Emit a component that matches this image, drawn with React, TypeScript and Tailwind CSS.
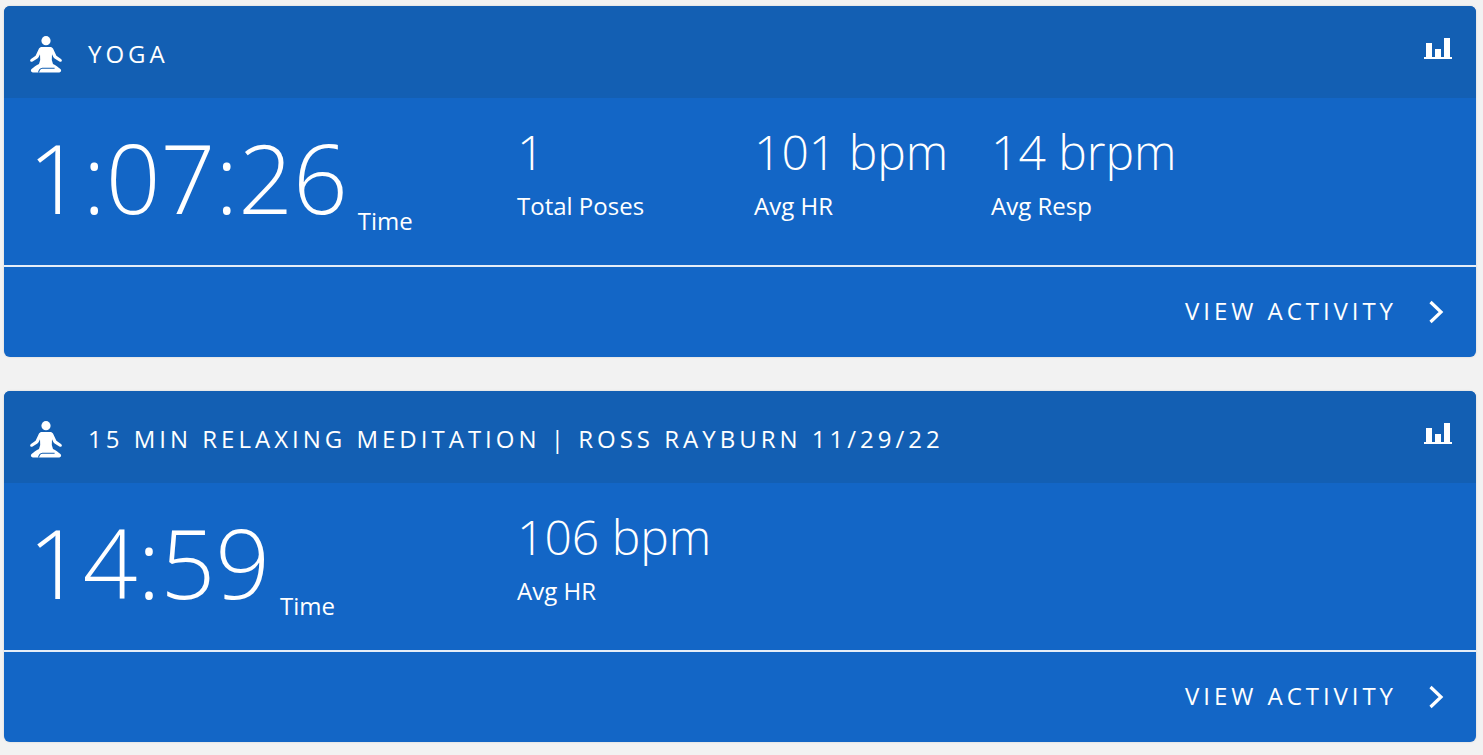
const YogaIcon = () => (
  <svg viewBox="0 0 32 37" className="w-[32px] h-[37px] shrink-0" fill="#fff">
    <circle cx="16" cy="4.7" r="4.6" />
    <path d="M9 12.6 C9.6 11.6 10.6 11 11.8 11 H20.2 C21.4 11 22.4 11.6 23 12.6 L26.4 19.8 L31 23 C31.9 23.6 32.1 24.5 31.6 25.2 C31.1 25.9 30.2 26 29.4 25.5 L24.6 22.4 C24 22 23.6 21.6 23.3 21 L22 18.2 L21.8 24 L23 28 C25.6 29.4 28.4 31.2 30.4 33 C31.8 34.4 31 36.5 29.2 36.5 H3 C1 36.5 .2 34.4 1.6 33 C3.6 31.2 6.4 29.4 9 28 L10.2 24 L10 18.2 L8.7 21 C8.4 21.6 8 22 7.4 22.4 L2.6 25.5 C1.8 26 .9 25.9 .4 25.2 C-.1 24.5 .1 23.6 1 23 L5.6 19.8 Z" />
    <path d="M8.5 36.5 C9 34.4 10.2 32.4 12.4 32.2 H24.6" fill="none" stroke="#135fb3" strokeWidth="1.1" />
  </svg>
);

const BarsIcon = () => (
  <svg viewBox="0 0 28 21" className="w-[28px] h-[21px]" fill="#fff">
    <rect x="2" y="5" width="6" height="14" />
    <rect x="11" y="11" width="6" height="8" />
    <rect x="20" y="0" width="6" height="19" />
    <rect x="0" y="19" width="28" height="2" />
  </svg>
);

const Chevron = () => (
  <svg viewBox="0 0 16 24" className="w-[16px] h-[24px]" fill="none" stroke="#fff" strokeWidth="3.2">
    <path d="M2.5 2 L13 12 L2.5 22" />
  </svg>
);

function Stat({ value, label }: { value: string; label: string }) {
  return (
    <div className="w-[237px] shrink-0 pt-[24px]">
      <div className="text-[48px] leading-[60px] font-light whitespace-nowrap">{value}</div>
      <div className="text-[24px] leading-[30px] mt-[9px]">{label}</div>
    </div>
  );
}

function ActivityCard({ title, time, stats }: { title: string; time: string; stats: { value: string; label: string }[] }) {
  return (
    <div className="bg-[#1366c6] rounded-[6px] overflow-hidden text-white shadow-[0_0_2px_rgba(0,0,0,0.15)]">
      <div className="h-[92px] bg-[#135fb3] flex items-center justify-between pl-[26px] pr-[24px]">
        <div className="flex items-center gap-[26px] pt-[4px]">
          <YogaIcon />
          <span className="text-[24px] tracking-[4px] uppercase leading-none">{title}</span>
        </div>
        <div className="self-start mt-[32px]"><BarsIcon /></div>
      </div>
      <div className="h-[167px] flex pl-[24px]">
        <div className="w-[489px] shrink-0 flex items-end pb-[29px]">
          <span className="text-[96px] leading-[120px] font-light -mb-[1px]">{time}</span>
          <span className="text-[24px] leading-[30px] ml-[10px]">Time</span>
        </div>
        {stats.map((s) => <Stat key={s.label} value={s.value} label={s.label} />)}
      </div>
      <div className="h-[2px] bg-[#e6eef8]" />
      <div className="h-[90px] flex items-center justify-end pr-[32px] gap-[33px]">
        <span className="text-[24px] tracking-[3.95px] uppercase leading-none -mr-[2px] pb-[2px]">View Activity</span>
        <Chevron />
      </div>
    </div>
  );
}

export default function App() {
  return (
    <div className="min-h-[755px] bg-[#f2f2f2] pt-[6px] pl-[4px] pr-[7px] flex flex-col gap-[34px] font-['Open_Sans',sans-serif]">
      <ActivityCard
        title="Yoga"
        time="1:07:26"
        stats={[
          { value: "1", label: "Total Poses" },
          { value: "101 bpm", label: "Avg HR" },
          { value: "14 brpm", label: "Avg Resp" },
        ]}
      />
      <ActivityCard
        title="15 min Relaxing Meditation | Ross Rayburn 11/29/22"
        time="14:59"
        stats={[{ value: "106 bpm", label: "Avg HR" }]}
      />
    </div>
  );
}
